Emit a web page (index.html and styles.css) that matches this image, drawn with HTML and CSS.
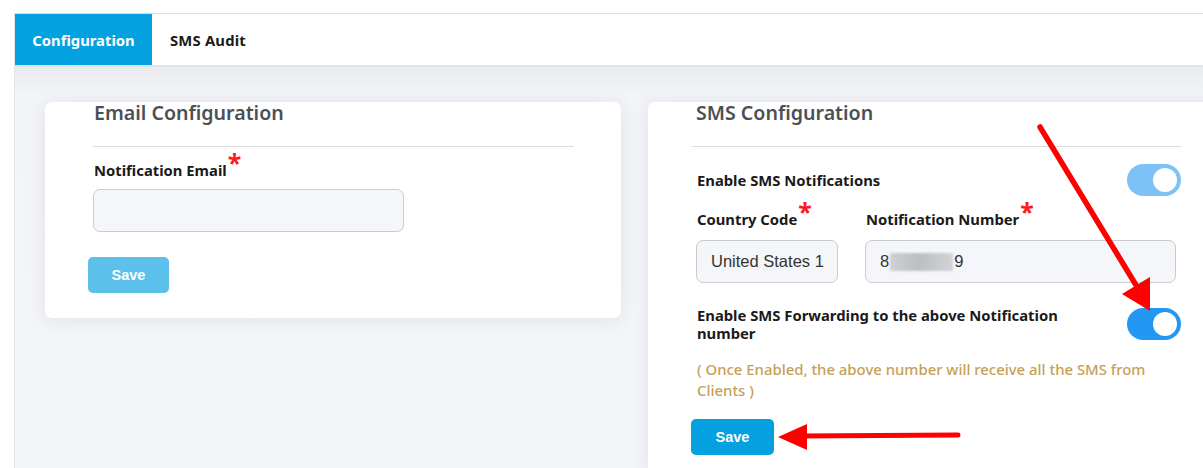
FILE: index.html
```html
<!DOCTYPE html>
<html>
<head>
<meta charset="utf-8">
<link rel="stylesheet" href="styles.css">
</head>
<body>
<div class="frame">
  <div class="tabs">
    <div class="tab active">Configuration</div>
    <div class="tab">SMS Audit</div>
  </div>
  <div class="content">
    <div class="card email-card">
      <h2 class="card-title">Email Configuration</h2>
      <div class="divider"></div>
      <label class="label">Notification Email<span class="req">*</span></label>
      <div class="input email-input"></div>
      <button class="btn btn-light">Save</button>
    </div>
    <div class="card sms-card">
      <h2 class="card-title">SMS Configuration</h2>
      <div class="divider"></div>
      <div class="toggle-row row-notify">
        <span class="label">Enable SMS Notifications</span>
        <span class="toggle toggle-light"><span class="knob"></span></span>
      </div>
      <div class="fields">
        <div class="field field-country">
          <label class="label">Country Code<span class="req">*</span></label>
          <div class="input">United States 1</div>
        </div>
        <div class="field field-number">
          <label class="label">Notification Number<span class="req">*</span></label>
          <div class="input">8<span class="blur"></span>9</div>
        </div>
      </div>
      <div class="toggle-row row-forward">
        <span class="label">Enable SMS Forwarding to the above Notification number</span>
        <span class="toggle toggle-on"><span class="knob"></span></span>
      </div>
      <p class="note">( Once Enabled, the above number will receive all the SMS from Clients )</p>
      <button class="btn btn-primary">Save</button>
    </div>
  </div>
</div>
<svg class="arrows" width="1203" height="468" viewBox="0 0 1203 468">
  <line x1="1040" y1="127" x2="1139" y2="290" stroke="#ff0000" stroke-width="5.5" stroke-linecap="round"/>
  <polygon points="1150,311 1122,294 1150,277" fill="#ff0000"/>
  <line x1="958" y1="435" x2="800" y2="436" stroke="#ff0000" stroke-width="5" stroke-linecap="round"/>
  <polygon points="778,437 807,424 807,450" fill="#ff0000"/>
</svg>
</body>
</html>
```
FILE: styles.css
```css
* { box-sizing: border-box; }
html, body { margin: 0; padding: 0; }
body {
  background: #ffffff;
  width: 1203px;
  height: 468px;
  overflow: hidden;
  position: relative;
  font-family: "Noto Sans", "Open Sans", sans-serif;
}
.frame {
  margin: 13px 0 0 14px;
  border-top: 1px solid #dcdfe4;
  border-left: 1px solid #e3e5e9;
  width: 1189px;
  overflow: hidden;
}
.tabs {
  display: flex;
  height: 53px;
  background: #ffffff;
  border-bottom: 2px solid #dfe2e8;
}
.tab {
  font-size: 14.8px;
  font-weight: 700;
  color: #1b1b1b;
  display: flex;
  align-items: center;
  padding: 0 18px;
  height: 51px;
  letter-spacing: 0.2px;
}
.tab.active {
  background: #03a1e0;
  color: #ffffff;
  width: 137px;
  justify-content: center;
  padding: 0;
  letter-spacing: 0;
}
.content {
  display: flex;
  align-items: flex-start;
  gap: 27px;
  padding: 35px 0 0 30px;
  height: 401px;
  overflow: hidden;
  background: linear-gradient(#e9ebf0, #f3f4f8 30px, #f4f5f9);
}
.card {
  background: #ffffff;
  border-radius: 7px;
  box-shadow: 0 2px 18px rgba(30, 40, 70, 0.09);
  flex: none;
}
.email-card {
  width: 576px;
  height: 216px;
  padding: 0 47px 0 48px;
}
.sms-card {
  width: 580px;
  height: 372px;
  padding: 0 47px 0 44px;
}
.card-title {
  margin: 0;
  font-size: 19.6px;
  font-weight: 600;
  line-height: 22px;
  color: #4b5057;
  padding-left: 1px;
}
.sms-card .card-title { padding-left: 4px; }
.divider {
  height: 1px;
  background: #dcdcdc;
  margin-top: 22px;
}
.label {
  display: block;
  font-size: 14.8px;
  font-weight: 700;
  color: #1a1a1a;
  line-height: 18px;
}
.req {
  color: #ff1a1a;
  font-size: 25px;
  line-height: 10px;
  position: relative;
  top: -4px;
  margin-left: 1px;
  font-weight: 700;
}
.email-card .label { margin-top: 14px; padding-left: 1px; }
.input {
  height: 43px;
  border: 1px solid #c9cbcf;
  border-radius: 7px;
  background: #f5f6fa;
  font-family: "Liberation Sans", Arial, sans-serif;
  font-size: 16.5px;
  color: #333;
  display: flex;
  align-items: center;
  padding: 0 10px 0 14px;
  white-space: nowrap;
  overflow: hidden;
}
.email-input {
  width: 311px;
  margin-top: 10px;
}
.btn {
  display: block;
  border: none;
  border-radius: 5px;
  color: #ffffff;
  font-family: "Liberation Sans", Arial, sans-serif;
  font-weight: 700;
  font-size: 14.5px;
  height: 36px;
}
.btn-light {
  background: #5bc1ea;
  width: 81px;
  margin: 25px 0 0 -5px;
}
.btn-primary {
  background: #05a0df;
  width: 83px;
  margin: 18px 0 0 -1px;
}
.toggle-row {
  display: flex;
  align-items: center;
  justify-content: space-between;
  padding-left: 5px;
}
.row-notify { margin-top: 17px; }
.row-forward { margin-top: 23px; }
.row-forward .label { width: 400px; }
.toggle {
  width: 54px;
  height: 32px;
  border-radius: 16px;
  position: relative;
  flex: none;
}
.toggle-light { background: #7cc2f7; }
.toggle-on { background: #2398f3; }
.knob {
  position: absolute;
  right: 4px;
  top: 4px;
  width: 24px;
  height: 24px;
  border-radius: 50%;
  background: #ffffff;
}
.fields {
  display: flex;
  gap: 27px;
  margin-top: 14px;
  padding-left: 4px;
}
.field .label { padding-left: 1px; }
.field .input { margin-top: 12px; }
.field-country .input { width: 142px; }
.field-number .input { width: 311px; }
.blur {
  display: inline-block;
  width: 63px;
  height: 18px;
  margin: 0 1px 0 1px;
  background: linear-gradient(90deg, #cfd0d4, #bcbec2 45%, #d2d4d8);
  filter: blur(1px);
}
.note {
  margin: 17px 0 0 0;
  padding-left: 5px;
  padding-right: 20px;
  font-size: 14.9px;
  font-weight: 500;
  line-height: 21px;
  color: #c6a057;
}
.arrows {
  position: absolute;
  left: 0;
  top: 0;
  pointer-events: none;
}
```
